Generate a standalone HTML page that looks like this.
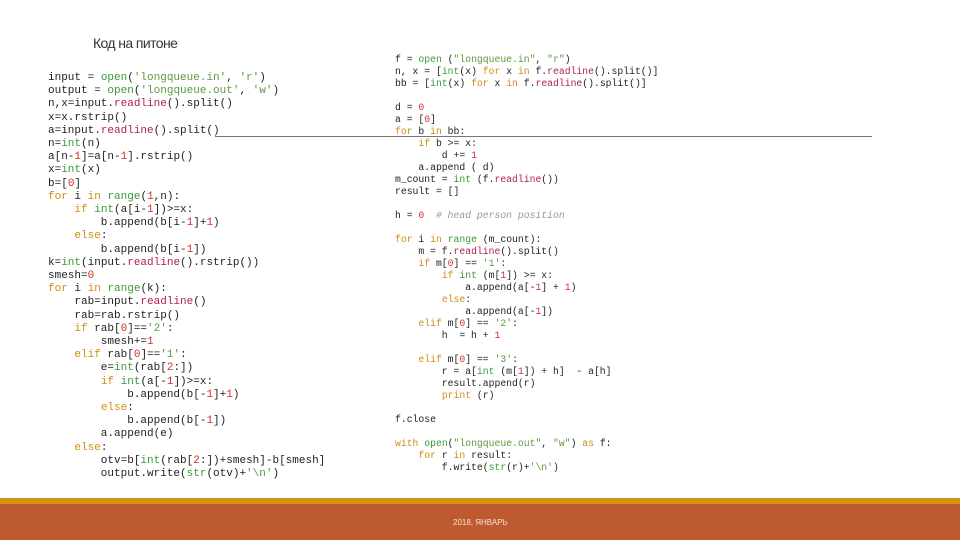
<!DOCTYPE html>
<html><head><meta charset="utf-8"><style>
body{margin:0;width:960px;height:540px;position:relative;background:#fff;overflow:hidden;font-family:"Liberation Sans",sans-serif}
.t{position:absolute;left:93px;top:35px;font-size:14px;color:#333;letter-spacing:-0.6px}
pre{margin:0;position:absolute;font-family:"Liberation Mono",monospace;color:#222}
#l{left:48px;top:72px;font-size:11px;line-height:13.2px}
#r{left:395px;top:54px;font-size:9.75px;line-height:12px}
.k{color:#d08c10}.s{color:#5a9a40}.n{color:#d03030}.f{color:#3a9a3a}.m{color:#b02050}.c{color:#999;font-style:italic}
.line{position:absolute;left:215px;top:136px;width:657px;height:1px;background:#777}
.y{position:absolute;left:0;top:498px;width:960px;height:6px;background:#d8940e}
.b{position:absolute;left:0;top:504px;width:960px;height:36px;background:#be5a30}
.ft{position:absolute;left:453px;top:518px;font-size:8px;color:#f4e0d0}
</style></head><body>
<div class="t">Код на питоне</div>
<pre id="l">input = <span class="f">open</span>(<span class="s">'longqueue.in'</span>, <span class="s">'r'</span>)
output = <span class="f">open</span>(<span class="s">'longqueue.out'</span>, <span class="s">'w'</span>)
n,x=input.<span class="m">readline</span>().split()
x=x.rstrip()
a=input.<span class="m">readline</span>().split()
n=<span class="f">int</span>(n)
a[n-<span class="n">1</span>]=a[n-<span class="n">1</span>].rstrip()
x=<span class="f">int</span>(x)
b=[<span class="n">0</span>]
<span class="k">for</span> i <span class="k">in</span> <span class="f">range</span>(<span class="n">1</span>,n):
    <span class="k">if</span> <span class="f">int</span>(a[i-<span class="n">1</span>])&gt;=x:
        b.append(b[i-<span class="n">1</span>]+<span class="n">1</span>)
    <span class="k">else</span>:
        b.append(b[i-<span class="n">1</span>])
k=<span class="f">int</span>(input.<span class="m">readline</span>().rstrip())
smesh=<span class="n">0</span>
<span class="k">for</span> i <span class="k">in</span> <span class="f">range</span>(k):
    rab=input.<span class="m">readline</span>()
    rab=rab.rstrip()
    <span class="k">if</span> rab[<span class="n">0</span>]==<span class="s">'2'</span>:
        smesh+=<span class="n">1</span>
    <span class="k">elif</span> rab[<span class="n">0</span>]==<span class="s">'1'</span>:
        e=<span class="f">int</span>(rab[<span class="n">2</span>:])
        <span class="k">if</span> <span class="f">int</span>(a[-<span class="n">1</span>])&gt;=x:
            b.append(b[-<span class="n">1</span>]+<span class="n">1</span>)
        <span class="k">else</span>:
            b.append(b[-<span class="n">1</span>])
        a.append(e)
    <span class="k">else</span>:
        otv=b[<span class="f">int</span>(rab[<span class="n">2</span>:])+smesh]-b[smesh]
        output.write(<span class="f">str</span>(otv)+<span class="s">'\n'</span>)</pre>
<pre id="r">f = <span class="f">open</span> (<span class="s">"longqueue.in"</span>, <span class="s">"r"</span>)
n, x = [<span class="f">int</span>(x) <span class="k">for</span> x <span class="k">in</span> f.<span class="m">readline</span>().split()]
bb = [<span class="f">int</span>(x) <span class="k">for</span> x <span class="k">in</span> f.<span class="m">readline</span>().split()]

d = <span class="n">0</span>
a = [<span class="n">0</span>]
<span class="k">for</span> b <span class="k">in</span> bb:
    <span class="k">if</span> b &gt;= x:
        d += <span class="n">1</span>
    a.append ( d)
m_count = <span class="f">int</span> (f.<span class="m">readline</span>())
result = []

h = <span class="n">0</span>  <span class="c"># head person position</span>

<span class="k">for</span> i <span class="k">in</span> <span class="f">range</span> (m_count):
    m = f.<span class="m">readline</span>().split()
    <span class="k">if</span> m[<span class="n">0</span>] == <span class="s">'1'</span>:
        <span class="k">if</span> <span class="f">int</span> (m[<span class="n">1</span>]) &gt;= x:
            a.append(a[-<span class="n">1</span>] + <span class="n">1</span>)
        <span class="k">else</span>:
            a.append(a[-<span class="n">1</span>])
    <span class="k">elif</span> m[<span class="n">0</span>] == <span class="s">'2'</span>:
        h  = h + <span class="n">1</span>

    <span class="k">elif</span> m[<span class="n">0</span>] == <span class="s">'3'</span>:
        r = a[<span class="f">int</span> (m[<span class="n">1</span>]) + h]  - a[h]
        result.append(r)
        <span class="k">print</span> (r)

f.close

<span class="k">with</span> <span class="f">open</span>(<span class="s">"longqueue.out"</span>, <span class="s">"w"</span>) <span class="k">as</span> f:
    <span class="k">for</span> r <span class="k">in</span> result:
        f.write(<span class="f">str</span>(r)+<span class="s">'\n'</span>)</pre>
<div class="line"></div>
<div class="y"></div><div class="b"></div>
<div class="ft">2018, ЯНВАРЬ</div>
</body></html>
